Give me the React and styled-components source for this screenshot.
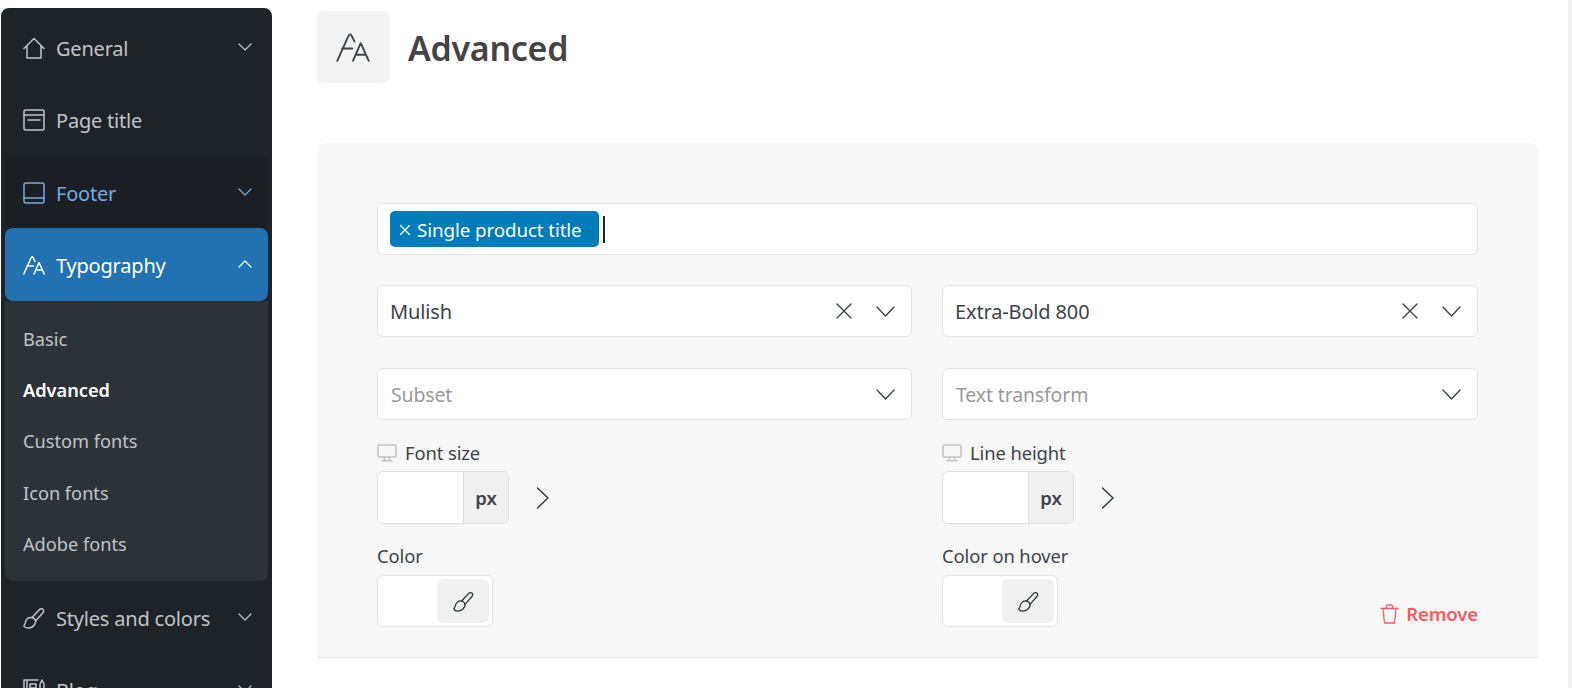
import React from 'react';
import styled, { createGlobalStyle } from 'styled-components';

const GlobalStyle = createGlobalStyle`
  html, body {
    margin: 0;
    padding: 0;
    height: 100%;
    overflow: hidden;
    background: #ffffff;
    font-family: "Noto Sans", "Open Sans", sans-serif;
  }
  * { box-sizing: border-box; }
`;

const Page = styled.div`
  display: flex;
  width: 1572px;
  height: 688px;
  overflow: hidden;
`;

const Sidebar = styled.nav`
  flex: 0 0 271px;
  margin: 8px 0 0 1px;
  padding: 4px 4px 0;
  background: #1d2327;
  border-radius: 8px 8px 0 0;
  overflow: hidden;
`;

const MenuItem = styled.div`
  display: flex;
  align-items: center;
  height: ${p => (p.$active ? 73 : 72)}px;
  padding: ${p => (p.$low ? 2 : 0)}px 16px 0 18px;
  border-radius: 8px;
  font-size: 20px;
  letter-spacing: -0.2px;
  color: ${p => (p.$active ? '#ffffff' : p.$hover ? '#72aee6' : '#c3c4c7')};
  background: ${p => (p.$active ? '#2271b1' : p.$hover ? '#1b1f23' : 'transparent')};
  svg { flex: none; }
`;

const MenuLabel = styled.span`
  flex: 1;
  margin-left: 11px;
  padding-top: 1px;
`;

const MenuChevron = styled.span`
  display: flex;
  margin-bottom: ${p => (p.$up ? 1 : 3)}px;
`;

const SubMenu = styled.div`
  padding: 12px 18px 11px;
  height: 280px;
  background: #2c3338;
  border-radius: 0 0 8px 8px;
`;

const SubItem = styled.div`
  display: flex;
  align-items: center;
  height: 51.3px;
  font-size: 18.2px;
  font-weight: ${p => (p.$current ? 600 : 400)};
  color: ${p => (p.$current ? '#ffffff' : '#c3c4c7')};
`;

const Main = styled.main`
  flex: 1;
  padding: 11px 30px 0 45px;
`;

const Header = styled.header`
  display: flex;
  align-items: center;
  gap: 19px;
  height: 72px;
  margin-bottom: 60px;
`;

const HeaderIcon = styled.div`
  display: flex;
  align-items: center;
  justify-content: center;
  width: 72px;
  height: 72px;
  background: #f3f3f3;
  border-radius: 6px;
`;

const Title = styled.h1`
  margin: 0;
  padding-top: 2px;
  font-size: 34px;
  font-weight: 600;
  letter-spacing: -0.3px;
  color: #444444;
`;

const Panel = styled.section`
  height: 515px;
  padding: 60px 60px 0;
  background: #f7f7f7;
  border-bottom: 1px solid #e8e8e8;
  border-radius: 8px 8px 0 0;
`;

const TagField = styled.div`
  display: flex;
  align-items: center;
  height: 52px;
  padding: 0 12px;
  background: #ffffff;
  border: 1px solid #e4e4e4;
  border-radius: 6px;
`;

const Tag = styled.span`
  display: flex;
  align-items: center;
  gap: 6px;
  height: 36px;
  width: 209px;
  padding: 1px 9px 0;
  background: #007cba;
  border-radius: 5px;
  color: #ffffff;
  font-size: 18.8px;
  letter-spacing: -0.1px;
`;

const Caret = styled.span`
  width: 2px;
  height: 27px;
  margin-left: 4px;
  background: #1d2327;
`;

const Columns = styled.div`
  display: grid;
  grid-template-columns: 535px 536px;
  column-gap: 30px;
  margin-top: 30px;
`;

const Column = styled.div`
  display: flex;
  flex-direction: column;
`;

const Select = styled.div`
  display: flex;
  align-items: center;
  height: 52px;
  margin-bottom: ${p => (p.$placeholder ? 0 : 31)}px;
  padding: 0 16px 0 ${p => (p.$placeholder ? 13 : 12)}px;
  background: #ffffff;
  border: 1px solid #e4e4e4;
  border-radius: 6px;
  font-size: ${p => (p.$placeholder ? 19.5 : 20)}px;
  letter-spacing: -0.15px;
  color: ${p => (p.$placeholder ? '#9a9a9a' : '#3c434a')};
`;

const SelectText = styled.span`
  flex: 1;
`;

const SelectIcons = styled.span`
  display: flex;
  align-items: center;
  gap: 23px;
`;

const FieldLabel = styled.label`
  display: flex;
  align-items: center;
  gap: 8px;
  height: 35px;
  margin-top: 16px;
  padding-bottom: 2px;
  font-size: 18.4px;
  letter-spacing: -0.1px;
  color: #3c434a;
`;

const ColorLabel = styled(FieldLabel)`
  padding-bottom: 5px;
`;

const SizeRow = styled.div`
  display: flex;
  align-items: center;
  gap: 27px;
`;

const SizeInput = styled.div`
  display: flex;
  justify-content: flex-end;
  width: 132px;
  height: 53px;
  background: #ffffff;
  border: 1px solid #e0e0e0;
  border-radius: 6px;
  overflow: hidden;
`;

const Unit = styled.span`
  display: flex;
  align-items: center;
  justify-content: center;
  width: 45px;
  background: #f0f0f0;
  border-left: 1px solid #e0e0e0;
  font-size: 18.5px;
  font-weight: 600;
  color: #3c434a;
`;

const ColorRow = styled.div`
  display: flex;
  align-items: flex-end;
  justify-content: space-between;
`;

const ColorInput = styled.div`
  display: flex;
  justify-content: flex-end;
  align-items: center;
  width: 116px;
  height: 52px;
  padding-right: 3px;
  background: #ffffff;
  border: 1px solid #e4e4e4;
  border-radius: 6px;
`;

const ColorButton = styled.span`
  display: flex;
  align-items: center;
  justify-content: center;
  width: 52px;
  height: 44px;
  background: #f0f0f0;
  border-radius: 6px;
`;

const Remove = styled.span`
  display: flex;
  align-items: center;
  gap: 7px;
  margin-bottom: 1px;
  font-size: 18.5px;
  font-weight: 600;
  letter-spacing: -0.1px;
  color: #ff5a5f;
`;

const ScrollTrack = styled.div`
  flex: 0 0 4px;
  background: #f0f0f0;
`;

const Icon = ({ size = 22, w, h, stroke = 'currentColor', sw = 1.5, children }) => (
  <svg width={w || size} height={h || size} viewBox={`0 0 ${w || size} ${h || size}`} fill="none"
    stroke={stroke} strokeWidth={sw} strokeLinecap="round" strokeLinejoin="round">
    {children}
  </svg>
);

const HomeIcon = () => <Icon><path d="M1 11.500 11 1.500l10 10M4 9v12h14V9" /></Icon>;
const PageIcon = () => (
  <Icon><rect x="1" y="1" width="20" height="20" rx="1.500" /><path d="M1 6h20M5 11h12" /></Icon>
);
const BookIcon = () => (
  <Icon><rect x="1" y="1" width="20" height="20" rx="2" /><path d="M1 16h20" /></Icon>
);
const FontsIcon = ({ size = 22, stroke = 'currentColor', sw = 1.500 }) => (
  <svg width={size} height={size} viewBox="0 0 22 22" fill="none" stroke={stroke} strokeWidth={sw}
    strokeLinecap="round" strokeLinejoin="round">
    <path d="M.8 20 8 4Q9 1.800 10 3.500l2 4M4 12h6.500M11 20l5-11.500L21.200 20M12.800 16h6.500" />
  </svg>
);
const BrushIcon = ({ size = 22, sw = 1.500, stroke = 'currentColor' }) => (
  <svg width={size} height={size} viewBox="0 0 22 22" fill="none" stroke={stroke} strokeWidth={sw}
    strokeLinecap="round" strokeLinejoin="round">
    <path d="M9 10.500 16.500 2.500c1-1 3.300-1 4 .5.500 1.500-.2 2.500-1 3.300L12.500 14" />
    <path d="M9 10.500c-3.200-.5-6 1.500-6.500 4.500-.3 2-1.200 3-1.700 4 1 1.800 3.700 2.200 5.700 1.900 3.200-.4 6-3.500 6.200-6.400-.2-1.700-1.700-3.500-3.700-4Z" />
  </svg>
);
const NewsIcon = () => (
  <Icon><path d="M1 21V1h14M1 1h3v20M7 5h6v4H7zM7 13h6M7 17h6M17 21V5l2-4 2 4v16" /></Icon>
);
const Chevron = ({ up, w = 14, h = 8, sw = 1.200, stroke = 'currentColor' }) => (
  <Icon w={w} h={h} sw={sw} stroke={stroke}>
    <path d={up ? `M1 ${h - 1} ${w / 2} 1l${w / 2 - 1} ${h - 2}` : `M1 1l${w / 2 - 1} ${h - 2} ${w / 2 - 1} ${-(h - 2)}`} />
  </Icon>
);
const SelectChevron = () => <Chevron w={19} h={11} sw={1.400} stroke="#3c434a" />;
const Cross = () => <Icon size={18} sw={1.400} stroke="#3c434a"><path d="M2 2l14 14M16 2 2 16" /></Icon>;
const TagCross = () => <Icon size={12} sw={1.200} stroke="#ffffff"><path d="M1.500 1.500l9 9M10.500 1.500l-9 9" /></Icon>;
const NextIcon = () => <Icon w={13} h={22} sw={1.400} stroke="#2c3338"><path d="M1.500 1 12 11 1.500 21" /></Icon>;
const MonitorIcon = () => (
  <Icon w={20} h={18} sw={1.500} stroke="#c2c2c2"><rect x="1" y="1" width="18" height="12" rx="1" /><path d="M7.500 13.500v3M12.500 13.500v3M5 16.800h10" /></Icon>
);
const TrashIcon = () => (
  <Icon w={19} h={20} sw={1.300} stroke="#ff5a5f"><path d="M1 4.500h17M3 5l1.500 14h10L16 5M6.500 4.500V2.500q0-1.500 1.500-1.500h3q1.500 0 1.500 1.500v2" /></Icon>
);

const SizeField = ({ label }) => (
  <>
    <FieldLabel><MonitorIcon />{label}</FieldLabel>
    <SizeRow>
      <SizeInput><Unit>px</Unit></SizeInput>
      <NextIcon />
    </SizeRow>
  </>
);

const ColorField = () => (
  <ColorInput>
    <ColorButton><BrushIcon size={21} sw={1.300} stroke="#2c3338" /></ColorButton>
  </ColorInput>
);

const submenu = ['Basic', 'Advanced', 'Custom fonts', 'Icon fonts', 'Adobe fonts'];

const App = () => (
  <Page>
    <GlobalStyle />
    <Sidebar>
      <MenuItem><HomeIcon /><MenuLabel>General</MenuLabel><MenuChevron><Chevron /></MenuChevron></MenuItem>
      <MenuItem><PageIcon /><MenuLabel>Page title</MenuLabel></MenuItem>
      <MenuItem $hover $low><BookIcon /><MenuLabel>Footer</MenuLabel><MenuChevron><Chevron /></MenuChevron></MenuItem>
      <MenuItem $active><FontsIcon /><MenuLabel>Typography</MenuLabel><MenuChevron $up><Chevron up /></MenuChevron></MenuItem>
      <SubMenu>
        {submenu.map(name => (
          <SubItem key={name} $current={name === 'Advanced'}>{name}</SubItem>
        ))}
      </SubMenu>
      <MenuItem $low><BrushIcon /><MenuLabel>Styles and colors</MenuLabel><MenuChevron><Chevron /></MenuChevron></MenuItem>
      <MenuItem $low><NewsIcon /><MenuLabel>Blog</MenuLabel><MenuChevron><Chevron /></MenuChevron></MenuItem>
    </Sidebar>
    <Main>
      <Header>
        <HeaderIcon><FontsIcon size={34} stroke="#3c434a" sw={1.200} /></HeaderIcon>
        <Title>Advanced</Title>
      </Header>
      <Panel>
        <TagField>
          <Tag><TagCross />Single product title</Tag>
          <Caret />
        </TagField>
        <Columns>
          <Column>
            <Select>
              <SelectText>Mulish</SelectText>
              <SelectIcons><Cross /><SelectChevron /></SelectIcons>
            </Select>
            <Select $placeholder>
              <SelectText>Subset</SelectText>
              <SelectChevron />
            </Select>
            <SizeField label="Font size" />
            <ColorLabel>Color</ColorLabel>
            <ColorRow><ColorField /></ColorRow>
          </Column>
          <Column>
            <Select>
              <SelectText>Extra-Bold 800</SelectText>
              <SelectIcons><Cross /><SelectChevron /></SelectIcons>
            </Select>
            <Select $placeholder>
              <SelectText>Text transform</SelectText>
              <SelectChevron />
            </Select>
            <SizeField label="Line height" />
            <ColorLabel>Color on hover</ColorLabel>
            <ColorRow>
              <ColorField />
              <Remove><TrashIcon />Remove</Remove>
            </ColorRow>
          </Column>
        </Columns>
      </Panel>
    </Main>
    <ScrollTrack />
  </Page>
);

export default App;
